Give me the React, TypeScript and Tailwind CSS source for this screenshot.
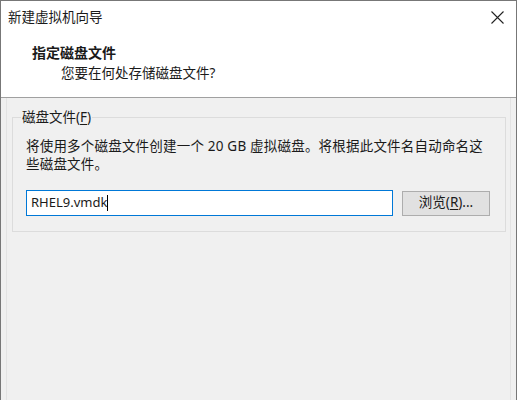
export default function App() {
    return (
        <div
            className="w-[517px] h-[400px] overflow-hidden bg-white border-x border-t border-[#777777] flex flex-col text-[#1a1a1a]"
            style={{ fontFamily: '"Noto Sans", "Noto Sans CJK SC", sans-serif' }}
        >
            {/* Title bar */}
            <div className="h-[33px] shrink-0 flex items-center justify-between pl-[7px] pr-[12px]">
                <span className="text-[13.5px] leading-none">新建虚拟机向导</span>
                <svg width="13" height="13" viewBox="0 0 13 13" className="text-[#222]">
                    <path d="M0.5 0.5 L12.5 12.5 M12.5 0.5 L0.5 12.5" stroke="currentColor" strokeWidth="1.1" fill="none" />
                </svg>
            </div>

            {/* Header */}
            <div className="h-[64px] shrink-0 pt-[9px] pl-[31px] border-b border-[#a0a0a0]">
                <div className="text-[14px] font-bold leading-[20px]">指定磁盘文件</div>
                <div className="text-[13.5px] leading-[20px] pl-[29px]">您要在何处存储磁盘文件?</div>
            </div>

            {/* Body */}
            <div className="flex-1 bg-[#f0f0f0] px-[5px] flex">
                <div className="flex-1 border-x border-[#e3e3e3] pt-[19px] pl-[5px] pr-[4px]">
                    <div className="relative border border-[#dcdcdc] pt-[19px] pl-[13px] pr-[15px] pb-[15px]">
                        <span className="absolute -top-[10px] left-[8px] px-[1px] bg-[#f0f0f0] text-[13.5px] leading-[18px]">
                            磁盘文件(<span className="underline underline-offset-2">F</span>)
                        </span>
                        <p className="text-[13.5px] leading-[18px] tracking-[0.2px] w-[462px]">
                            将使用多个磁盘文件创建一个 20 GB 虚拟磁盘。将根据此文件名自动命名这些磁盘文件。
                        </p>
                        <div className="flex items-center gap-[9px] mt-[17px]">
                            <div className="w-[367px] h-[26px] bg-white border border-[#0078d7] flex items-center pl-[4px] text-[13px]">
                                <span>RHEL9.vmdk</span>
                                <span className="w-px h-[16px] bg-black"></span>
                            </div>
                            <button className="w-[88px] h-[25px] bg-[#e1e1e1] border border-[#adadad] text-[13.5px] leading-none flex items-center justify-center">
                                浏览(<span className="underline underline-offset-2">R</span>)...
                            </button>
                        </div>
                    </div>
                </div>
            </div>
        </div>
    );
}
